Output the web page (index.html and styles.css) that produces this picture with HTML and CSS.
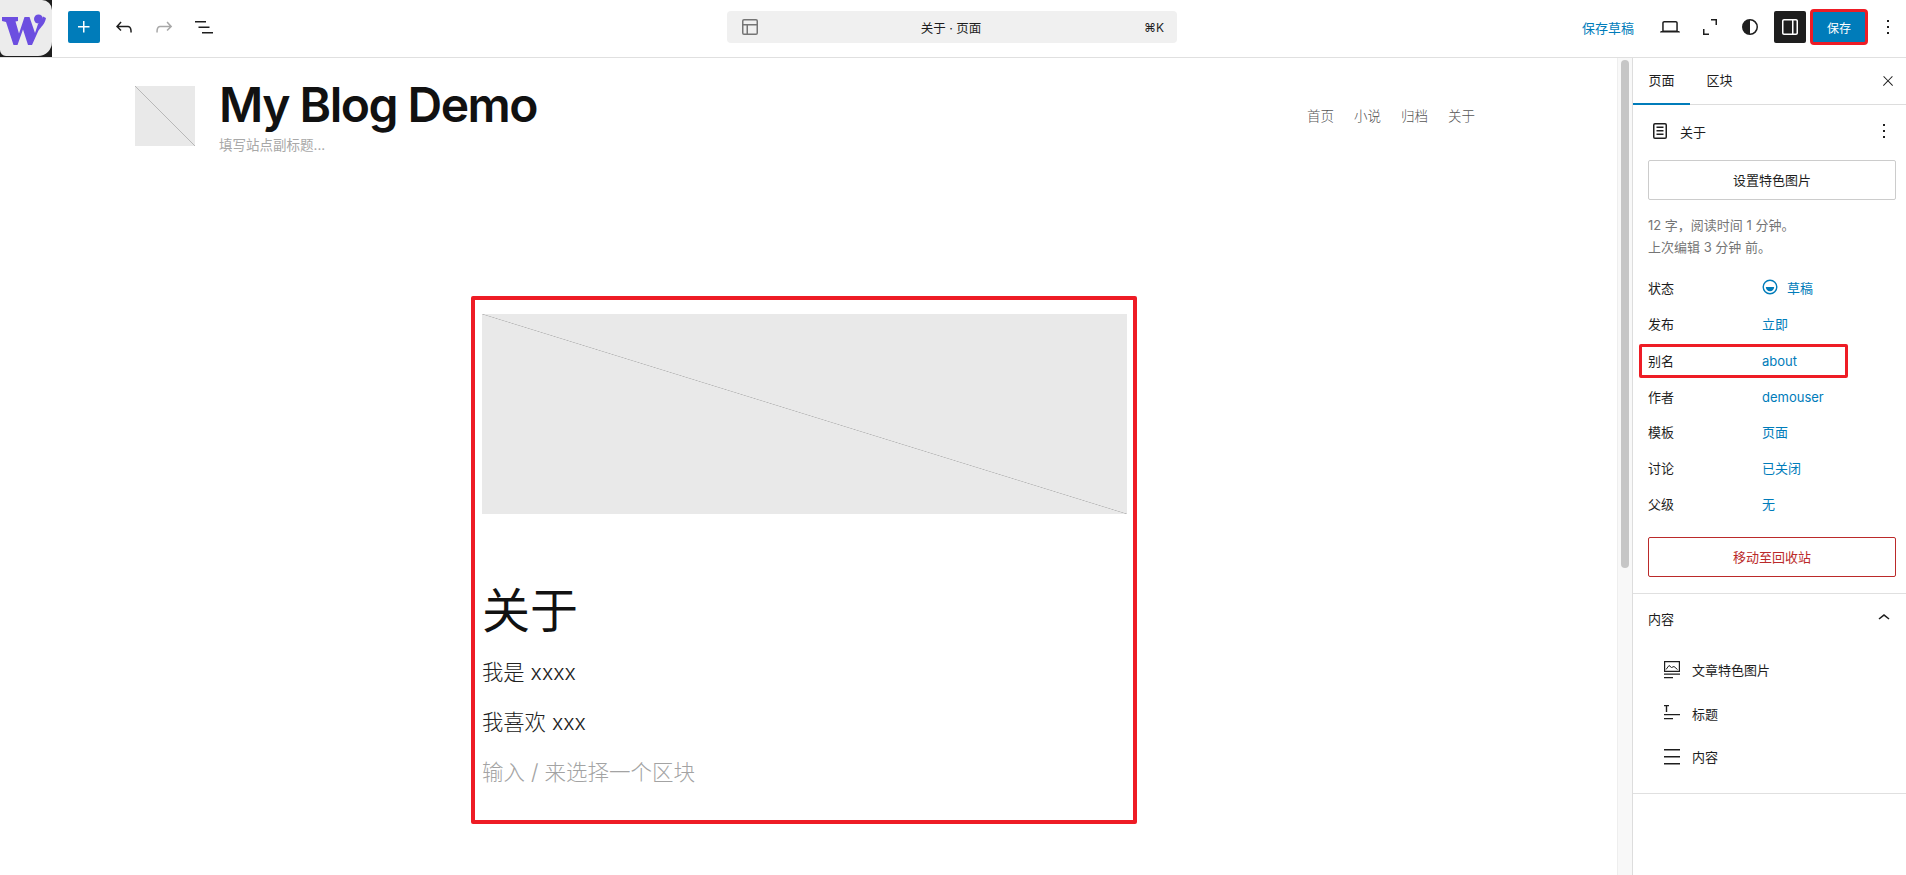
FILE: index.html
```html
<!DOCTYPE html>
<html lang="zh-CN">
<head>
<meta charset="utf-8">
<title>关于 · 页面</title>
<link rel="stylesheet" href="styles.css">
</head>
<body>
<div class="app">
  <header class="topbar">
    <div class="top-left">
      <div class="logo-wrap">
        <div class="logo">
          <svg viewBox="0 0 52 52" width="52" height="52"><path class="logo-w" d="M2 14H18V18L15.500 18.500L19 30.500L24.500 14H29.500L35 30L38 21C40 19 43 17.500 43 13.500L46 15C45 21 41 24 38.500 27.500L32 42H28L23 26.500L17.500 42H13.500L6 19L2 18Z"/><circle class="logo-w" cx="38.500" cy="16" r="4.500"/></svg>
        </div>
      </div>
      <button class="btn-plus" type="button"><svg viewBox="0 0 24 24" width="24" height="24"><path d="M11 12.5V17.5H12.5V12.5H17.5V11H12.5V6H11V11H6V12.5H11Z"/></svg></button>
      <span class="tool"><svg viewBox="0 0 24 24" width="24" height="24"><path d="M18.3 11.7c-.6-.6-1.4-.9-2.3-.9H6.7l2.9-3.3-1.1-1-4.5 5L8.5 16l1-1-2.7-2.7H16c.5 0 .9.2 1.3.5 1 1 1 3.4 1 4.5v.3h1.5v-.2c0-1.5 0-4.3-1.5-5.7z"/></svg></span>
      <span class="tool tool-muted"><svg viewBox="0 0 24 24" width="24" height="24"><path d="M15.6 6.5l-1.1 1 2.9 3.3H8c-.9 0-1.7.3-2.3.9-1.4 1.5-1.4 4.2-1.4 5.6v.2h1.5v-.3c0-1.1 0-3.5 1-4.5.3-.3.7-.5 1.3-.5h9.2L14.5 15l1.1 1.1 4.6-4.6-4.6-5z"/></svg></span>
      <span class="tool"><svg viewBox="0 0 24 24" width="24" height="24"><path d="M3 6h11v1.5H3V6Zm3.5 5.5h11V13h-11v-1.5ZM21 17H10v1.5h11V17Z"/></svg></span>
    </div>
    <div class="command">
      <svg class="command-icon" viewBox="0 0 24 24" width="24" height="24"><path fill-rule="evenodd" d="M18 5.5H6a.5.5 0 0 0-.5.5v3h13V6a.5.5 0 0 0-.5-.5Zm.5 5H10v8h8a.5.5 0 0 0 .5-.5v-7.5Zm-10 0h-3V18a.5.5 0 0 0 .5.5h2.5v-8ZM6 4h12a2 2 0 0 1 2 2v12a2 2 0 0 1-2 2H6a2 2 0 0 1-2-2V6a2 2 0 0 1 2-2Z"/></svg>
      <span class="command-title">关于 · 页面</span>
      <span class="command-key">⌘K</span>
    </div>
    <div class="top-right">
      <span class="draft">保存草稿</span>
      <span class="tool"><svg viewBox="0 0 24 24" width="24" height="24"><path d="M20.5 16h-.7V8c0-1.1-.9-2-2-2H6.2c-1.1 0-2 .9-2 2v8h-.7c-.8 0-1.5.7-1.5 1.5h20c0-.8-.7-1.5-1.5-1.5zM5.7 8c0-.3.2-.5.5-.5h11.6c.3 0 .5.2.5.5v7.6H5.7V8z"/></svg></span>
      <span class="tool"><svg viewBox="0 0 24 24" width="24" height="24"><path d="M5 14h1.5v4.5H11V20H5zM13 4h6v6h-1.5V5.5H13z"/></svg></span>
      <span class="tool"><svg viewBox="0 0 24 24" width="24" height="24"><path fill-rule="evenodd" d="M12 4a8 8 0 1 0 0 16 8 8 0 0 0 0-16Zm0 1.5v13a6.5 6.5 0 1 0 0-13Z"/></svg></span>
      <span class="tool-active"><svg viewBox="0 0 24 24" width="24" height="24"><path d="M18 4H6c-1.1 0-2 .9-2 2v12c0 1.1.9 2 2 2h12c1.1 0 2-.9 2-2V6c0-1.1-.9-2-2-2zm-4 14.5H6c-.3 0-.5-.2-.5-.5V6c0-.3.2-.5.5-.5h8v13zm4.5-.5c0 .3-.2.5-.5.5h-2.5v-13H18c.3 0 .5.2.5.5v12z"/></svg></span>
      <button class="btn-save" type="button">保存</button>
      <span class="tool tool-more"><svg viewBox="0 0 24 24" width="24" height="24"><path d="M13 19h-2v-2h2v2zm0-6h-2v-2h2v2zm0-6h-2V5h2v2z"/></svg></span>
    </div>
  </header>

  <div class="workspace">
    <main class="canvas">
      <div class="site-header">
        <div class="placeholder site-logo"></div>
        <div class="site-brand">
          <h1 class="site-title">My Blog Demo</h1>
          <p class="site-tagline">填写站点副标题...</p>
        </div>
        <nav class="site-nav">
          <span>首页</span><span>小说</span><span>归档</span><span>关于</span>
        </nav>
      </div>
      <section class="post">
        <div class="placeholder post-image"></div>
        <h2 class="post-title">关于</h2>
        <p class="post-line post-first">我是 xxxx</p>
        <p class="post-line">我喜欢 xxx</p>
        <p class="post-line post-hint">输入 / 来选择一个区块</p>
      </section>
    </main>

    <div class="scrolltrack"><div class="scrollthumb"></div></div>

    <aside class="sidebar">
      <div class="tabs">
        <span class="tab tab-on">页面</span>
        <span class="tab">区块</span>
        <svg class="tabs-close" viewBox="0 0 24 24" width="16" height="16"><path d="M13 11.8l6.1-6.3-1-1-6.1 6.2-6.1-6.2-1 1 6.1 6.3-6.5 6.7 1 1 6.5-6.6 6.5 6.6 1-1z"/></svg>
      </div>

      <div class="panel panel-doc">
        <div class="doc-head">
          <svg viewBox="0 0 24 24" width="24" height="24"><path fill-rule="evenodd" d="M15.5 7.5h-7V9h7V7.5Zm-7 3.5h7v1.5h-7V11Zm7 3.5h-7V16h7v-1.5ZM17 4H7a2 2 0 0 0-2 2v12a2 2 0 0 0 2 2h10a2 2 0 0 0 2-2V6a2 2 0 0 0-2-2Zm0 1.5H7a.5.5 0 0 0-.5.5v12a.5.5 0 0 0 .5.5h10a.5.5 0 0 0 .5-.5V6a.5.5 0 0 0-.5-.5Z"/></svg>
          <span class="doc-name">关于</span>
          <svg class="doc-more" viewBox="0 0 24 24" width="24" height="24"><path d="M13 19h-2v-2h2v2zm0-6h-2v-2h2v2zm0-6h-2V5h2v2z"/></svg>
        </div>
        <button class="btn-wide" type="button">设置特色图片</button>
        <p class="doc-meta">12 字，阅读时间 1 分钟。<br>上次编辑 3 分钟 前。</p>
        <dl class="rows">
          <div class="row"><dt>状态</dt><dd class="status"><svg viewBox="0 0 16 16" width="16" height="16"><circle cx="8" cy="8" r="6.8" class="status-ring"/><path d="M3.8 8h8.4a4.2 4.2 0 0 1-8.4 0Z"/></svg>草稿</dd></div>
          <div class="row"><dt>发布</dt><dd>立即</dd></div>
          <div class="row row-latin row-mark"><dt>别名</dt><dd>about</dd></div>
          <div class="row row-latin"><dt>作者</dt><dd>demouser</dd></div>
          <div class="row"><dt>模板</dt><dd>页面</dd></div>
          <div class="row"><dt>讨论</dt><dd>已关闭</dd></div>
          <div class="row"><dt>父级</dt><dd>无</dd></div>
        </dl>
        <button class="btn-wide btn-danger" type="button">移动至回收站</button>
      </div>

      <div class="panel panel-content">
        <div class="content-head">
          <span>内容</span>
          <svg viewBox="0 0 24 24" width="24" height="24"><path d="M6.5 12.4L12 8l5.5 4.4-.9 1.2L12 10l-4.5 3.6-1-1.2z"/></svg>
        </div>
        <ul class="outline">
          <li><svg viewBox="0 0 16 18" width="16" height="18"><path d="M0 0h16v11H0zM1.200 1.200v8.600h13.600V1.200z" fill-rule="evenodd"/><path d="M2 8.500 5 4.500 7.500 6.500 10 5.500 13.500 8.500" class="outline-stroke"/><path d="M0 12.500h16v1.300H0zM0 16h9v1.300H0z"/></svg>文章特色图片</li>
          <li><svg viewBox="0 0 16 18" width="16" height="18"><path d="M0 1h5v1.300H3.200V8H1.800V2.300H0zM0 10h16v1.300H0zM0 14h9v1.300H0z"/></svg>标题</li>
          <li><svg viewBox="0 0 16 18" width="16" height="18"><path d="M0 1h16v1.500H0zM0 8h16v1.500H0zM0 15h16v1.500H0z"/></svg>内容</li>
        </ul>
      </div>
    </aside>
  </div>
</div>
</body>
</html>
```

FILE: styles.css
```css
*, *::after { box-sizing: border-box; }
html, body { margin: 0; height: 100%; overflow: hidden; background: #fff; }
body { font-family: "Inter", "Noto Sans CJK SC", sans-serif; font-size: 13px; color: #1e1e1e; }
svg { display: block; fill: currentColor; flex: none; }
button { font: inherit; cursor: default; }
p, h1, h2, dl, dd, ul { margin: 0; padding: 0; }

.app { display: flex; flex-direction: column; height: 875px; }

/* top bar */
.topbar { flex: none; height: 58px; border-bottom: 1px solid #e0e0e0; display: grid; grid-template-columns: 727px 450px 1fr; align-items: start; }
.top-left { display: flex; align-items: center; height: 54px; }
.logo-wrap { width: 52px; height: 57px; background: #1e1e1e; flex: none; align-self: flex-start; }
.logo { width: 52px; height: 56px; background: #ececec; border-radius: 0 10px 14px 6px; padding-top: 3px; color: #6c4ee0; }
.btn-plus { width: 32px; height: 32px; margin: 0 4px 0 16px; padding: 4px; border: 0; border-radius: 2px; background: #007cba; color: #fff; }
.tool { width: 40px; height: 32px; display: flex; align-items: center; justify-content: center; color: #1e1e1e; }
.tool-muted { color: #a8a8a8; }

.command { height: 32px; margin-top: 11px; background: #f0f0f0; border-radius: 4px; display: grid; grid-template-columns: 1fr auto 1fr; align-items: center; padding: 0 13px 0 11px; font-size: 12.500px; }
.command-icon { color: #757575; }
.command-title { color: #1e1e1e; }
.command-key { justify-self: end; color: #1e1e1e; font-size: 12px; }

.top-right { display: flex; align-items: center; justify-content: flex-end; height: 54px; }
.draft { color: #007cba; font-size: 13px; margin-right: 16px; }
.tool-active { width: 32px; height: 32px; background: #1e1e1e; color: #fff; border-radius: 2px; padding: 4px; margin-left: 4px; }
.btn-save { width: 54px; height: 32px; margin-left: 6px; border: 0; border-radius: 2px; background: #007cba; color: #fff; font-size: 12px; padding: 0; outline: 3px solid #ee1c25; outline-offset: -1px; }
.tool-more { width: 36px; margin-left: 4px; }

/* workspace */
.workspace { flex: 1; display: flex; min-height: 0; }
.canvas { flex: 1; min-width: 0; padding-left: 135px; }

.site-header { display: flex; padding-top: 28px; width: 1340px; }
.placeholder { background: linear-gradient(to top right, #e9e9e9 calc(50% - 0.6px), #b8b8b8 50%, #e9e9e9 calc(50% + 0.6px)); }
.site-logo { width: 60px; height: 60px; flex: none; }
.site-brand { margin-left: 24px; }
.site-title { font-size: 48px; line-height: 38px; font-weight: 600; color: #111; letter-spacing: -1.500px; }
.site-tagline { font-size: 13.500px; line-height: 20px; color: #a8a8a8; margin-top: 11px; }
.site-nav { margin-left: auto; display: flex; gap: 20px; font-size: 13.500px; color: #555; margin-top: 20px; line-height: 20px; font-weight: 300; }

.post { width: 666px; height: 528px; margin: 141px 0 0 336px; border: 4px solid #ee1c25; border-radius: 2px; padding: 14px 6px 0 7px; }
.post-image { height: 200px; }
.post-title { font-size: 48px; line-height: 62px; font-weight: 400; color: #111; margin-top: 66px; }
.post-line { font-size: 21.300px; line-height: 30px; color: #222; margin-top: 20px; font-weight: 300; }
.post-first { margin-top: 15px; }
.post-hint { color: #a3a3a3; font-size: 21.500px; }

.scrolltrack { flex: none; width: 15px; background: #f8f8f8; border-left: 1px solid #eee; padding: 2px 3px 0 3px; }
.scrollthumb { width: 8px; height: 508px; border-radius: 4px; background: #c6c6c6; }

/* sidebar */
.sidebar { flex: none; width: 274px; border-left: 1px solid #ddd; }
.tabs { height: 47px; border-bottom: 1px solid #ddd; display: flex; align-items: center; padding-right: 10px; }
.tab { width: 57px; height: 47px; line-height: 45px; text-align: center; font-size: 13px; }
.tab + .tab { margin-left: 1px; }
.tab-on { box-shadow: inset 0 -2px 0 #007cba; margin-bottom: -1px; }
.tabs-close { margin-left: auto; }

.panel { border-bottom: 1px solid #e0e0e0; }
.panel-doc { height: 489px; padding: 14px 10px 0 15px; }
.doc-head { display: flex; align-items: center; height: 24px; }
.doc-name { margin-left: 8px; font-size: 13px; }
.doc-more { margin-left: auto; }
.btn-wide { display: block; width: 248px; height: 40px; margin-top: 17px; padding: 0 0 2px; background: #fff; border: 1px solid #ccc; border-radius: 2px; font-size: 13px; color: #1e1e1e; }
.doc-meta { font-size: 13px; line-height: 22px; color: #757575; margin-top: 14px; }
.rows { margin-top: 11px; }
.row { display: flex; align-items: center; height: 36px; position: relative; font-size: 13px; }
.row-latin { padding-top: 3px; }
.row dt { width: 114px; }
.row dd { color: #007cba; }
.status { display: flex; align-items: center; gap: 9px; }
.status-ring { fill: none; stroke: currentColor; stroke-width: 1.400; }
.row-mark::after { content: ""; position: absolute; left: -9px; top: 3px; width: 209px; height: 34px; border: 3px solid #ee1c25; border-radius: 2px; }
.btn-danger { margin-top: 16px; border-color: #bb2a2a; color: #bb2a2a; }

.panel-content { height: 200px; padding: 0 10px 0 15px; }
.content-head { display: flex; justify-content: space-between; align-items: center; height: 48px; margin-bottom: 6px; font-size: 13px; }
.outline { list-style: none; padding-left: 16px; }
.outline li { display: flex; align-items: center; gap: 12px; height: 43.500px; font-size: 13px; }
.outline-stroke { fill: none; stroke: currentColor; stroke-width: 1; }
```
